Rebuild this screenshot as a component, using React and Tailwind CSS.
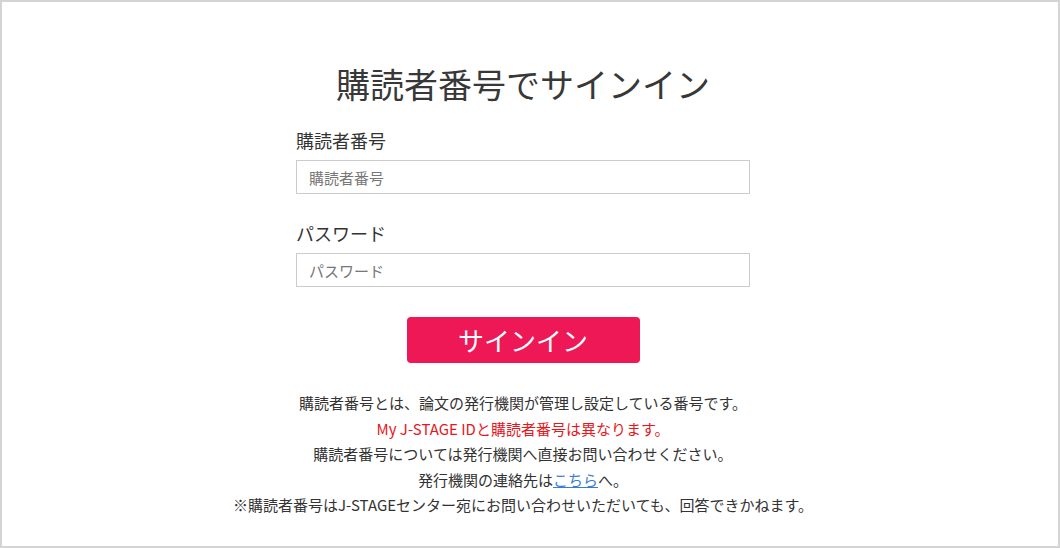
import React from 'react';

const Field = ({ label, placeholder, type = 'text' }) => (
  <div className="flex flex-col">
    <label className="text-[18px] leading-[26px] text-[#333]">{label}</label>
    <input
      type={type === 'password' ? 'text' : type}
      placeholder={placeholder}
      className="mt-[7px] h-[34px] w-full border border-[#cccccc] bg-white px-[12px] text-[15px] text-[#333] outline-none placeholder:text-[#777]"
    />
  </div>
);

export default function App() {
  return (
    <div
      className="h-[548px] w-full border-2 border-[#d4d4d4] bg-white text-[#333]"
      style={{ fontFamily: '"Noto Sans CJK JP", "Noto Sans", sans-serif' }}
    >
      <div className="flex flex-col items-center pr-[14px] pt-[58px]">
        <h1 className="text-[34px] font-normal leading-[48px] text-[#383838]">購読者番号でサインイン</h1>

        <form className="mt-[19px] flex w-[454px] flex-col gap-[26px]" onSubmit={(e) => e.preventDefault()}>
          <Field label="購読者番号" placeholder="購読者番号" />
          <Field label="パスワード" placeholder="パスワード" type="password" />
        </form>

        <button
          type="button"
          className="mt-[30px] h-[46px] w-[233px] rounded-[4px] bg-[#ee1856] text-[26px] leading-none text-white"
        >
          サインイン
        </button>

        <div className="mt-[27px] text-center text-[15px] leading-[25.5px] text-[#333]">
          <p>購読者番号とは、論文の発行機関が管理し設定している番号です。</p>
          <p className="text-[#e8161d]">My J-STAGE IDと購読者番号は異なります。</p>
          <p>購読者番号については発行機関へ直接お問い合わせください。</p>
          <p>
            発行機関の連絡先は
            <a href="#" className="text-[#3a7bd5] underline">こちら</a>
            へ。
          </p>
          <p>※購読者番号はJ-STAGEセンター宛にお問い合わせいただいても、回答できかねます。</p>
        </div>
      </div>
    </div>
  );
}
